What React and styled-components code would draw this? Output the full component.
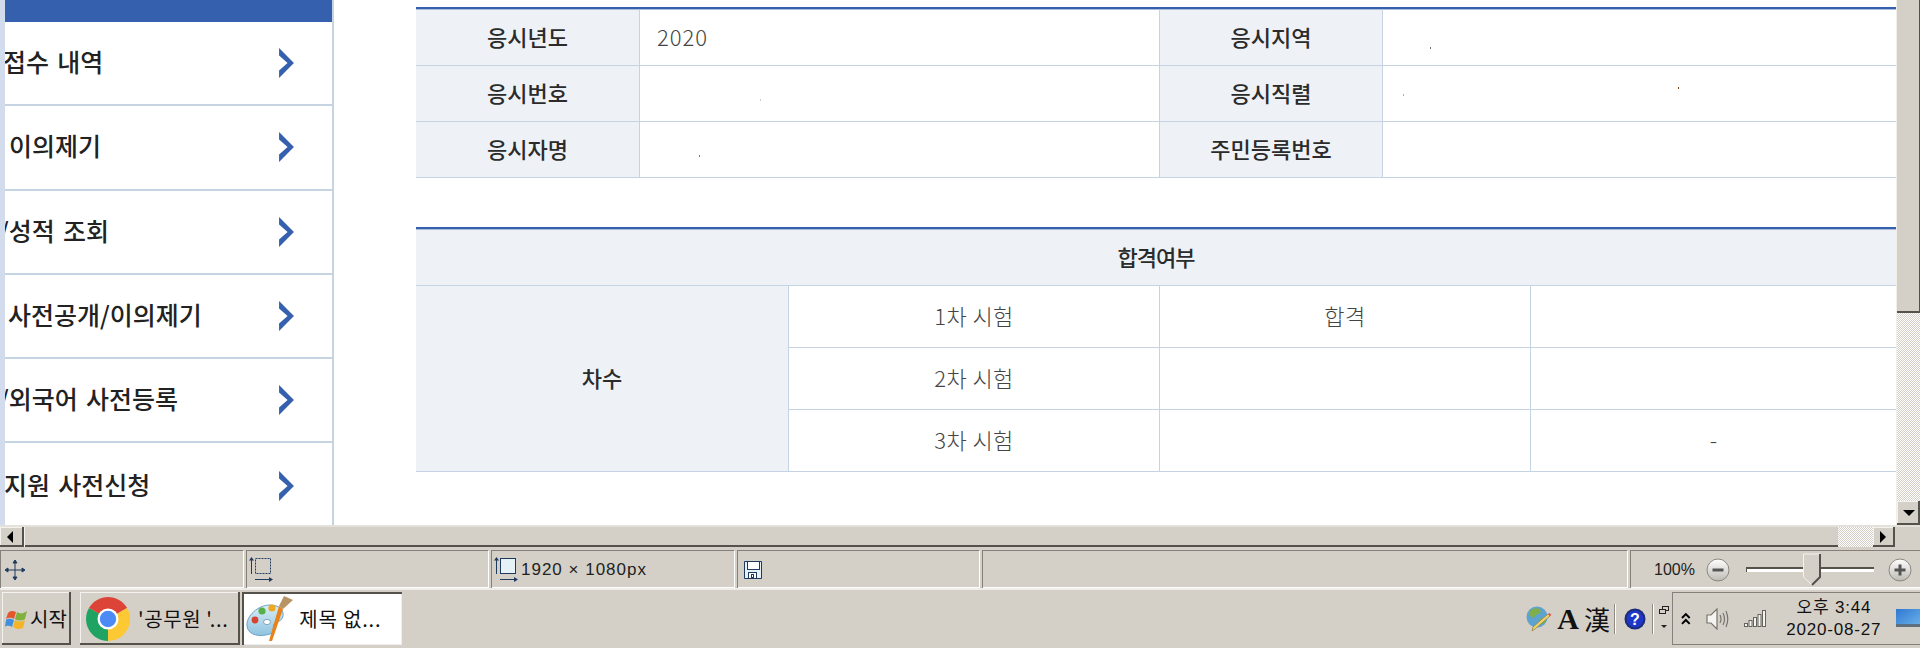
import React from "react";
import styled, { createGlobalStyle, css } from "styled-components";

const Global = createGlobalStyle`
  html, body { margin: 0; padding: 0; background: #d4d0c8; overflow: hidden; }
  * { box-sizing: border-box; }
`;

const KR = `"Noto Sans CJK KR", "Noto Sans", sans-serif`;
const GRAY = "#d4d0c8";
const BLUE = "#3560ae";
const LINE = "#c5d3e2";
const HEAD = "#eef2f7";

const raised = css`
  box-shadow: inset -2px -2px 0 #55524c, inset 1px 1px 0 #f4f2ee;
`;
const dither = css`
  background: repeating-conic-gradient(#d4d0c8 0 25%, #fff 0 50%) 0 0 / 2px 2px;
`;

const Screen = styled.div`
  width: 1920px; height: 648px; display: flex; flex-direction: column; overflow: hidden; background: ${GRAY};
`;
const Viewport = styled.div`
  height: 525px; display: flex; background: #fff; flex: none;
`;
const Strip = styled.div`width: 5px; background: #d3dcec; flex: none;`;
const Sidebar = styled.nav`
  width: 329px; flex: none; display: flex; flex-direction: column;
  border-right: 2px solid ${LINE}; overflow: hidden;
`;
const SideHead = styled.div`height: 22px; flex: none; background: ${BLUE}; margin-right: -2px;`;
const SideRow = styled.a`
  height: 84.3px; flex: none; display: flex; align-items: center; justify-content: space-between;
  padding-right: 37px; border-bottom: 2px solid ${LINE};
  font: 500 25px/1 ${KR}; color: #222; white-space: nowrap; word-spacing: 2.5px;
  &:last-child { border-bottom: 0; }
`;
const SideLabel = styled.span`margin: -3px 0 0 ${p => p.$indent}px;`;
const Chevron = styled.svg`width: 17px; height: 30px; flex: none;`;

const Content = styled.main`
  flex: 1; padding: 7px 0 0 82px; display: flex; flex-direction: column; gap: 49px; min-width: 0;
`;
const Table = styled.table`
  width: 1480px; table-layout: fixed; border-collapse: separate; border-spacing: 0;
  border-top: 2px solid ${BLUE};
  tr:first-child > * { border-top: 1px solid #a9bcd9; }
`;
const cell = css`
  border-bottom: 1px solid ${LINE}; border-right: 1px solid ${LINE};
  text-align: center; vertical-align: middle; padding: 0 0 3px; position: relative;
  &:last-child { border-right: 0; }
`;
const Th = styled.th`
  ${cell}; background: ${HEAD}; color: #2b2b2b; font: 500 22px/1 ${KR};
  height: ${p => p.$h}px; letter-spacing: ${p => p.$ls ?? 0}px;
`;
const Td = styled.td`
  ${cell}; background: #fff; color: #444; font: 300 22px/1 ${KR};
  height: ${p => p.$h}px; letter-spacing: ${p => (p.$left ? 1 : 0.4)}px;
  text-align: ${p => (p.$left ? "left" : "center")};
  padding-left: ${p => (p.$left ? 17 : 0)}px;
`;
const Speck = styled.i`
  position: absolute; width: 1px; height: 2px; left: ${p => p.$x}px; top: ${p => p.$y}px; background: ${p => p.$c || "#777"};
`;

const VBar = styled.div`width: 24px; flex: none; display: flex; flex-direction: column; border-left: 1px solid #f1efea;`;
const VThumb = styled.div`height: 313px; background: ${GRAY}; box-shadow: inset -1px -2px 0 #55524c;`;
const VTrack = styled.div`flex: 1; ${dither};`;
const ArrowBtn = styled.div`
  width: ${p => p.$w}px; height: ${p => p.$h}px; flex: none; background: ${GRAY}; ${raised};
  display: flex; align-items: center; justify-content: center;
`;

const HBar = styled.div`height: 22px; flex: none; display: flex; border-top: 2px solid #e4e1da;`;
const HThumb = styled.div`width: 1814px; background: ${GRAY}; box-shadow: inset 1px 0 0 #f4f2ee, inset 0 -2px 0 #55524c;`;
const HTrack = styled.div`width: 35px; ${dither};`;
const Corner = styled.div`flex: 1; background: ${GRAY};`;

const Status = styled.div`
  height: 41px; flex: none; padding-top: 3px; display: flex; gap: 3px;
`;
const Panel = styled.div`
  width: ${p => p.$w}px; height: 38px; flex: none; display: flex; align-items: center;
  padding-left: ${p => p.$pad ?? 4}px; gap: 3px;
  border-top: 1px solid #85817a; border-left: 1px solid #85817a;
  box-shadow: 1px 1px 0 #fff, inset 0 -1px 0 #fff;
  font: 400 17px/1 "Liberation Sans", sans-serif; color: #222; white-space: nowrap;
`;
const SizeLabel = styled.span`letter-spacing: 1px; font-size: 17px;`;
const Zoom = styled.div`
  flex: 1; display: flex; align-items: center; padding-left: 23px; height: 100%;
`;
const ZoomPct = styled.span`width: 52px; font-size: 16px;`;
const Round = styled.svg`width: 24px; height: 24px; flex: none;`;
const Track = styled.div`
  width: 128px; height: 5px; margin: 0 14px 0 16px; position: relative; background: #fff;
  border-top: 2px solid #55524c; border-left: 1px solid #55524c;
`;
const Thumb = styled.svg`position: absolute; left: 56px; top: -16px; width: 18px; height: 33px;`;

const Taskbar = styled.div`
  flex: 1; display: flex; align-items: center; padding: 2px 0 3px 2px; border-top: 2px solid #f0eee9;
`;
const TaskBtn = styled.div`
  width: ${p => p.$w}px; height: 53px; flex: none; display: flex; align-items: center;
  gap: ${p => p.$gap ?? 8}px; padding-left: ${p => p.$pad ?? 6}px; margin-right: ${p => p.$mr ?? 0}px;
  font: 400 20px/1 ${KR}; color: #111; white-space: nowrap; overflow: hidden; letter-spacing: ${p => p.$ls ?? 0}px;
  background: ${p => (p.$active ? "#fff" : GRAY)};
  ${p => (p.$active
    ? css`box-shadow: inset 2px 2px 0 #55524c, inset -1px -1px 0 #eee;`
    : raised)};
`;
const Spacer = styled.div`flex: 1;`;
const Ime = styled.div`
  display: flex; align-items: center; height: 100%; padding-right: 3px; flex: none;
`;
const ImeGlyph = styled.span`
  font: ${p => p.$w} ${p => p.$s}px/1 ${p => p.$f}; color: #111; margin-left: ${p => p.$ml}px;
`;
const Sep = styled.div`width: 2px; height: 30px; margin: 0 ${p => p.$r}px 0 ${p => p.$l}px; background: #8f8b83; border-right: 1px solid #fff;`;
const Tray = styled.div`
  width: 248px; height: 53px; flex: none; display: flex; align-items: center; padding-left: 8px;
  border: 1px solid #85817a; border-width: 1px 0 1px 1px;
`;
const TrayIcon = styled.span`display: flex; margin-left: ${p => p.$ml}px;`;
const Clock = styled.div`
  width: 112px; margin-left: 14px; text-align: center; font: 400 17px/22px "Liberation Sans", ${KR}; color: #111; letter-spacing: 0.8px;
  white-space: nowrap;
`;
const ClockLine = styled.div``;

const Chev = () => (
  <Chevron viewBox="0 0 16 28" preserveAspectRatio="none"><path d="M1 0 L15 14 L1 28 L1 21 L9 14 L1 7 Z" fill={BLUE} /></Chevron>
);
const Tri = ({ d }) => {
  const p = { left: "M9 2 L9 14 L3 8 Z", right: "M4 2 L4 14 L10 8 Z", down: "M2 5 L14 5 L8 11 Z" }[d];
  return <svg width="16" height="16" viewBox="0 0 16 16"><path d={p} fill="#000" /></svg>;
};

const MoveIcon = () => (
  <svg width="20" height="20" viewBox="0 0 20 20" fill="none" stroke="#1f3a5f" strokeWidth="1">
    <path d="M10 1V19M1 10H19" />
    <path d="M10 0 L8 3H12ZM10 20 L8 17H12ZM0 10 L3 8V12ZM20 10 L17 8V12Z" fill="#1f3a5f" />
  </svg>
);
const SelIcon = () => (
  <svg width="24" height="26" viewBox="0 0 24 26" fill="none" stroke="#1f3a5f">
    <rect x="6.5" y="1.5" width="15" height="15" strokeDasharray="2 1" />
    <path d="M2.5 2V17M6 22.5H22" />
    <path d="M2.5 0L0 3.5H5ZM24 22.5L20 20V25Z" fill="#1f3a5f" stroke="none" />
  </svg>
);
const SizeIcon = () => (
  <svg width="24" height="26" viewBox="0 0 24 26" fill="none" stroke="#1f3a5f">
    <rect x="6.5" y="1.5" width="15" height="15" fill="#e6f1f7" />
    <path d="M2.5 2V17M6 22.5H22" />
    <path d="M2.5 0L0 3.5H5ZM24 22.5L20 20V25Z" fill="#1f3a5f" stroke="none" />
  </svg>
);
const DiskIcon = () => (
  <svg width="20" height="20" viewBox="0 0 20 20" stroke="#1f3a5f">
    <path d="M1.5 1.5H18.5V18.5H1.5V3Z" fill="#e6f1f7" />
    <rect x="4.5" y="1.5" width="12" height="8" fill="#fff" />
    <rect x="5.5" y="12.5" width="8" height="6" fill="#fff" />
    <rect x="8.5" y="14.5" width="2" height="3" fill="none" />
  </svg>
);
const CircleBtn = ({ plus }) => (
  <Round viewBox="0 0 24 24">
    <defs>
      <linearGradient id={plus ? "gp" : "gm"} x1="0" y1="0" x2="0" y2="1">
        <stop offset="0" stopColor="#fff" /><stop offset="1" stopColor="#bdbab3" />
      </linearGradient>
    </defs>
    <circle cx="12" cy="12" r="11" fill={`url(#${plus ? "gp" : "gm"})`} stroke="#8b8880" />
    <path d={plus ? "M6.5 12H17.5M12 6.5V17.5" : "M6.5 12H17.5"} stroke="#555" strokeWidth="3" />
  </Round>
);
const FlagIcon = () => (
  <svg width="22" height="24" viewBox="0 0 22 24">
    <path d="M3 6 C6 3 8 4 11 5 L9 12 C7 11 4 10 1 12Z" fill="#e4572e" />
    <path d="M12 5 C15 7 18 7 22 4 L20 12 C17 14 13 14 10 12Z" fill="#7fb13c" />
    <path d="M1 13 C4 11 6 12 9 13 L7 20 C5 19 2 18 0 20Z" fill="#3f8fdc" />
    <path d="M10 13 C13 15 16 15 20 13 L18 21 C14 23 11 22 8 20Z" fill="#f4b42a" />
  </svg>
);
const ChromeIcon = () => (
  <svg width="44" height="44" viewBox="0 0 44 44">
    <path d="M22 22 L3 11 A22 22 0 0 1 41.1 11 Z" fill="#db4437" />
    <path d="M22 22 L41.1 11 A22 22 0 0 1 22 44 Z" fill="#fcc934" />
    <path d="M22 22 L22 44 A22 22 0 0 1 3 11 Z" fill="#1ea362" />
    <circle cx="22" cy="22" r="10.5" fill="#fff" />
    <circle cx="22" cy="22" r="8.2" fill="#4c8bf5" />
  </svg>
);
const PaintIcon = () => (
  <svg width="48" height="46" viewBox="0 0 48 46">
    <defs><linearGradient id="pal" x1="0" y1="0" x2="0" y2="1"><stop offset="0" stopColor="#d9eef8" /><stop offset="1" stopColor="#8fc3df" /></linearGradient></defs>
    <path d="M1 30 C0 20 12 9 24 9 C33 9 38 14 37 20 C36 26 30 25 28 28 C26 33 30 36 24 38 C15 41 2 40 1 30Z" fill="url(#pal)" stroke="#6fa3c4" />
    <ellipse cx="21" cy="26" rx="3.5" ry="2.6" fill="#fff" stroke="#7fa5bd" />
    <circle cx="9" cy="24" r="3.4" fill="#d8432f" />
    <circle cx="16" cy="15" r="3.6" fill="#59b04a" />
    <circle cx="26" cy="12" r="3.6" fill="#f0a722" />
    <path d="M33 10 L37 13 L26 45 L23 45Z" fill="#e8821c" />
    <path d="M33 10 L38 0 L47 4 L37 13Z" fill="#b89464" />
  </svg>
);
const GlobeIcon = () => (
  <svg width="26" height="26" viewBox="0 0 26 26">
    <circle cx="11" cy="11" r="10.5" fill="#5ea3cf" />
    <path d="M4 5 C8 1 14 2 15 5 C13 9 9 8 8 12 C5 12 3 9 4 5ZM13 13 C17 11 20 13 19 16 C17 19 14 19 13 13Z" fill="#7fae4b" />
    <path d="M24 10 L9 23 L6 25 L7 21 L22 8Z" fill="#f2d36b" stroke="#8d7a3d" strokeWidth=".7" />
    <path d="M24 10 L22 8 L23.5 7 L25.5 9Z" fill="#d9534f" />
  </svg>
);
const HelpIcon = () => (
  <svg width="22" height="22" viewBox="0 0 22 22">
    <circle cx="11" cy="11" r="10.5" fill="#1b2c78" />
    <circle cx="11" cy="11" r="8.5" fill="#1f37c8" />
    <text x="11" y="16.5" textAnchor="middle" fontFamily="Liberation Sans" fontWeight="700" fontSize="16" fill="#fff">?</text>
  </svg>
);
const SmallIcons = () => (
  <svg width="10" height="26" viewBox="0 0 10 26" fill="none" stroke="#222">
    <rect x="3.5" y="0.5" width="6" height="4" />
    <rect x="0.5" y="3.5" width="6" height="4" fill="#d4d0c8" />
    <path d="M2 19H8L5 22Z" fill="#222" stroke="none" />
  </svg>
);
const UpIcon = () => (
  <svg width="10" height="14" viewBox="0 0 10 14" fill="none" stroke="#000" strokeWidth="2">
    <path d="M1 6 L5 2 L9 6M1 12 L5 8 L9 12" />
  </svg>
);
const SpeakerIcon = () => (
  <svg width="24" height="22" viewBox="0 0 24 22" fill="none" stroke="#77746d" strokeWidth="1.2">
    <path d="M1 7H5L11 1V21L5 15H1Z" fill="#f5f4f0" />
    <path d="M14 7 Q16 11 14 15M17 5 Q20 11 17 17M20 3 Q23.5 11 20 19" />
  </svg>
);
const SignalIcon = () => (
  <svg width="22" height="17" viewBox="0 0 22 17" stroke="#66635c" fill="#f5f4f0">
    <rect x=".5" y="13.5" width="3" height="3" /><rect x="5" y="10.5" width="3" height="6" />
    <rect x="9.5" y="7.5" width="3" height="9" /><rect x="14" y="4.5" width="3" height="12" />
    <rect x="18.5" y=".5" width="3" height="16" />
  </svg>
);
const DesktopIcon = () => (
  <svg width="24" height="19" viewBox="0 0 24 19">
    <defs><linearGradient id="dk" x1="0" y1="0" x2="1" y2="1"><stop offset="0" stopColor="#2f78d2" /><stop offset="1" stopColor="#6db4ea" /></linearGradient></defs>
    <rect width="24" height="18" fill="url(#dk)" />
    <rect y="15" width="24" height="3" fill="#5e6f80" />
  </svg>
);

const menu = [
  ["접수 내역", -2], ["이의제기", 4], ["/성적 조회", -6], ["사전공개/이의제기", 3], ["/외국어 사전등록", -6], ["지원 사전신청", -1],
];

export default function App() {
  return (
    <>
      <Global />
      <Screen>
        <Viewport>
          <Strip />
          <Sidebar>
            <SideHead />
            {menu.map(([t, i]) => (
              <SideRow key={t}><SideLabel $indent={i}>{t}</SideLabel><Chev /></SideRow>
            ))}
          </Sidebar>
          <Content>
            <Table>
              <colgroup><col width="224" /><col width="520" /><col width="223" /><col /></colgroup>
              <tbody>
                <tr>
                  <Th $h={57}>응시년도</Th><Td $h={57} $left>2020</Td>
                  <Th $h={57}>응시지역</Th><Td $h={57}><Speck $x={47} $y={37} /></Td>
                </tr>
                <tr>
                  <Th $h={56}>응시번호</Th><Td $h={56}><Speck $x={120} $y={33} $c="#ccc" /></Td>
                  <Th $h={56}>응시직렬</Th><Td $h={56}><Speck $x={20} $y={28} $c="#d8a468" /><Speck $x={295} $y={21} $c="#8a3a10" /></Td>
                </tr>
                <tr>
                  <Th $h={56}>응시자명</Th><Td $h={56}><Speck $x={59} $y={33} /></Td>
                  <Th $h={56}>주민등록번호</Th><Td $h={56} />
                </tr>
              </tbody>
            </Table>
            <Table>
              <colgroup><col width="373" /><col width="371" /><col width="371" /><col /></colgroup>
              <tbody>
                <tr><Th colSpan={4} $h={57} $ls={-1}>합격여부</Th></tr>
                <tr>
                  <Th rowSpan={3}>차수</Th>
                  <Td $h={62}>1차 시험</Td><Td $h={62}>합격</Td><Td $h={62} />
                </tr>
                <tr><Td $h={62}>2차 시험</Td><Td $h={62} /><Td $h={62} /></tr>
                <tr><Td $h={62}>3차 시험</Td><Td $h={62} /><Td $h={62}>-</Td></tr>
              </tbody>
            </Table>
          </Content>
          <VBar>
            <VThumb />
            <VTrack />
            <ArrowBtn $w={23} $h={24}><Tri d="down" /></ArrowBtn>
          </VBar>
        </Viewport>
        <HBar>
          <ArrowBtn $w={24} $h={20}><Tri d="left" /></ArrowBtn>
          <HThumb />
          <HTrack />
          <ArrowBtn $w={22} $h={20}><Tri d="right" /></ArrowBtn>
          <Corner />
        </HBar>
        <Status>
          <Panel $w={243}><MoveIcon /></Panel>
          <Panel $w={242} $pad={2}><SelIcon /></Panel>
          <Panel $w={243} $pad={2}><SizeIcon /><SizeLabel>1920 × 1080px</SizeLabel></Panel>
          <Panel $w={242} $pad={5}><DiskIcon /></Panel>
          <Panel $w={645} />
          <Panel $w={290} $pad={0}>
            <Zoom>
              <ZoomPct>100%</ZoomPct>
              <CircleBtn />
              <Track>
                <Thumb viewBox="0 0 18 33">
                  <path d="M0.5 1H17V24L9 32L0.5 24Z" fill="#d4d0c8" stroke="#f4f2ee" />
                  <path d="M17 1V24L9 32" fill="none" stroke="#55524c" strokeWidth="2" />
                </Thumb>
              </Track>
              <CircleBtn plus />
            </Zoom>
          </Panel>
        </Status>
        <Taskbar>
          <TaskBtn $w={69} $pad={3} $gap={3} $mr={9}><FlagIcon />시작</TaskBtn>
          <TaskBtn $w={160} $mr={2} $gap={8} $ls={0.6}><ChromeIcon />'공무원 '...</TaskBtn>
          <TaskBtn $w={160} $active $pad={4} $gap={0} $ls={0.8}><PaintIcon />&nbsp;제목 없...</TaskBtn>
          <Spacer />
          <Ime>
            <GlobeIcon />
            <ImeGlyph $w="700" $s={30} $f={`"Liberation Serif", serif`} $ml={5}>A</ImeGlyph>
            <ImeGlyph $w="400" $s={26} $f={KR} $ml={5}>漢</ImeGlyph>
            <Sep $l={4} $r={8} />
            <HelpIcon />
            <Sep $l={6} $r={5} />
            <SmallIcons />
          </Ime>
          <Tray>
            <UpIcon />
            <TrayIcon $ml={15}><SpeakerIcon /></TrayIcon>
            <TrayIcon $ml={14}><SignalIcon /></TrayIcon>
            <Clock><ClockLine>오후 3:44</ClockLine><ClockLine>2020-08-27</ClockLine></Clock>
            <TrayIcon $ml={8}><DesktopIcon /></TrayIcon>
          </Tray>
        </Taskbar>
      </Screen>
    </>
  );
}
